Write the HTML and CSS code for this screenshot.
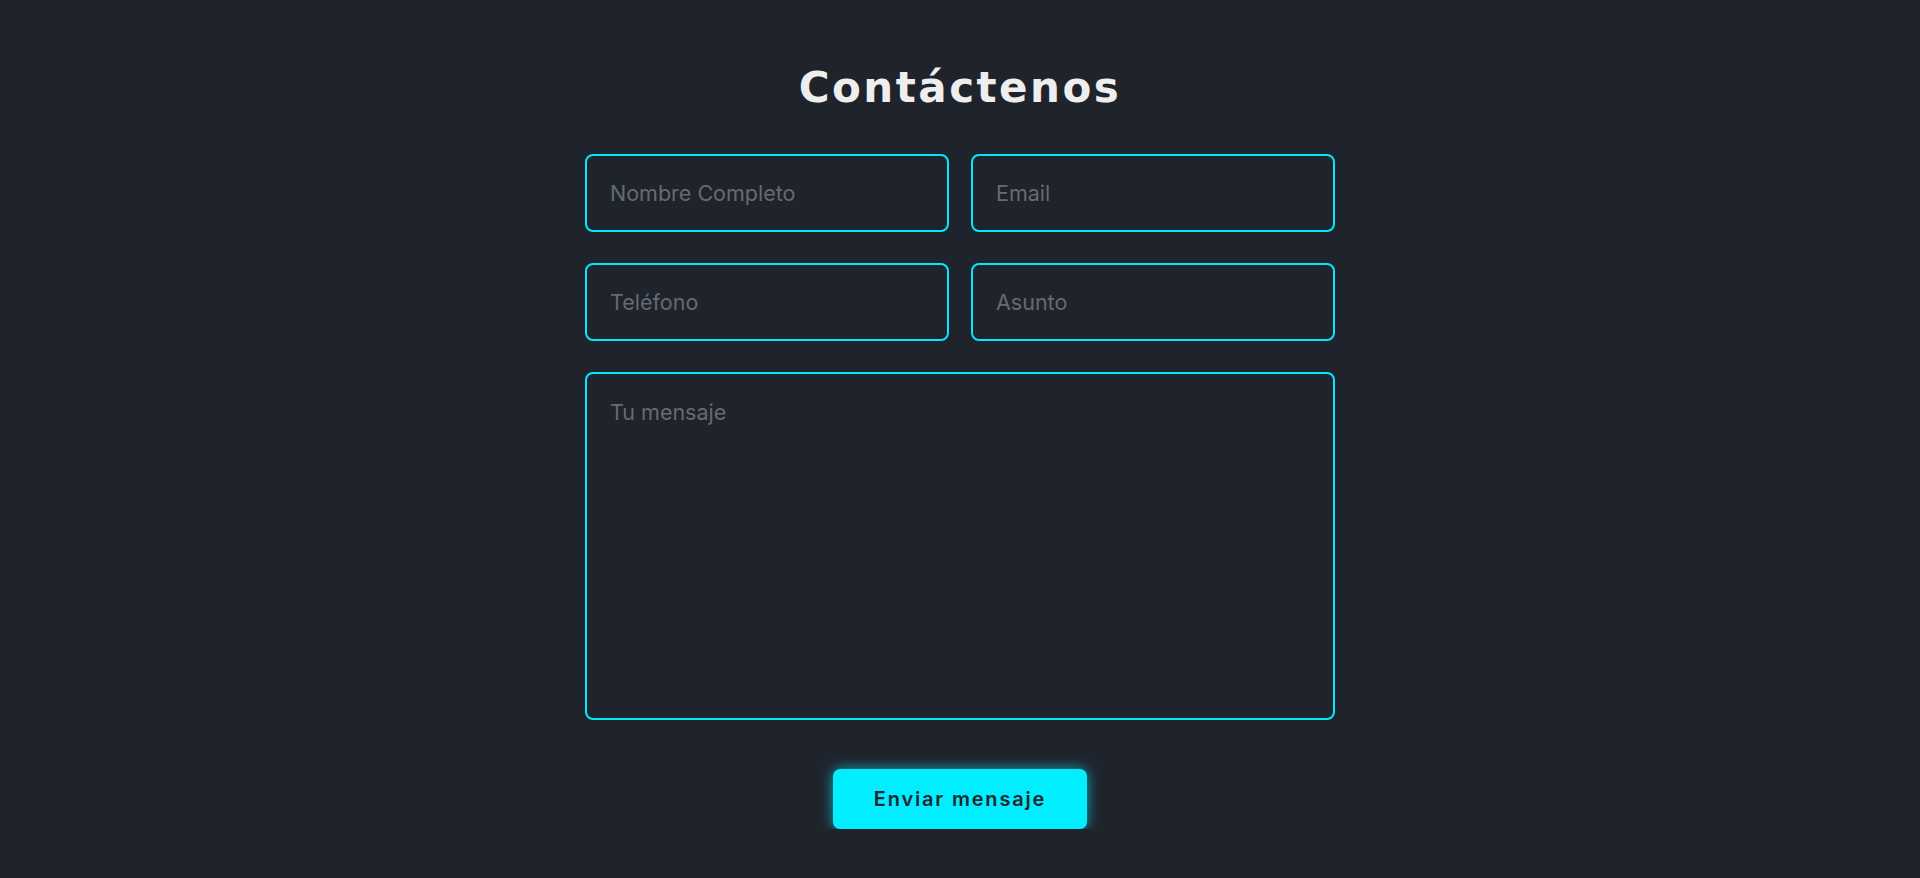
FILE: index.html
```html
<!DOCTYPE html>
<html lang="es">
<head>
<meta charset="utf-8">
<title>Contáctenos</title>
<link rel="stylesheet" href="styles.css">
</head>
<body>
<section class="contact">
  <h2 class="contact-title">Contáctenos</h2>
  <form class="contact-form" onsubmit="return false">
    <div class="form-row">
      <input class="field" type="text" placeholder="Nombre Completo">
      <input class="field" type="email" placeholder="Email">
    </div>
    <div class="form-row">
      <input class="field" type="tel" placeholder="Teléfono">
      <input class="field" type="text" placeholder="Asunto">
    </div>
    <textarea class="field message" placeholder="Tu mensaje"></textarea>
    <div class="actions">
      <button class="send-btn" type="submit">Enviar mensaje</button>
    </div>
  </form>
</section>
</body>
</html>
```
FILE: styles.css
```css
* { box-sizing: border-box; }
html, body {
  margin: 0;
  background: #1f232c;
  font-family: Inter, "Noto Sans", sans-serif;
}
.contact {
  padding-top: 64px;
}
.contact-title {
  margin: 0 0 42px;
  text-align: center;
  color: #eeeeee;
  font-family: "DejaVu Sans", Inter, sans-serif;
  font-size: 42px;
  font-weight: 700;
  line-height: 48px;
  letter-spacing: 2.5px;
}
.contact-form {
  width: 750px;
  margin: 0 auto;
}
.form-row {
  display: flex;
  gap: 22px;
  margin-bottom: 31px;
}
.field {
  display: block;
  width: 100%;
  flex: 1;
  height: 78px;
  padding: 0 23px;
  border: 2px solid #00eaff;
  border-radius: 8px;
  background: transparent;
  color: #ddd;
  font-family: Inter, "Noto Sans", sans-serif;
  font-size: 21.5px;
  outline: none;
}
.field::placeholder {
  color: #676a70;
}
.message {
  height: 348px;
  padding: 22px 23px;
  resize: none;
  line-height: 1.5;
}
.actions {
  display: flex;
  justify-content: center;
  margin-top: 49px;
}
.send-btn {
  width: 254px;
  height: 60px;
  border: none;
  border-radius: 7px;
  background: #00eeff;
  color: #22262e;
  font-family: Inter, "Noto Sans", sans-serif;
  font-size: 20px;
  font-weight: 600;
  letter-spacing: 1.8px;
  box-shadow: 0 0 14px rgba(0, 238, 255, 0.65);
  cursor: pointer;
}
```
